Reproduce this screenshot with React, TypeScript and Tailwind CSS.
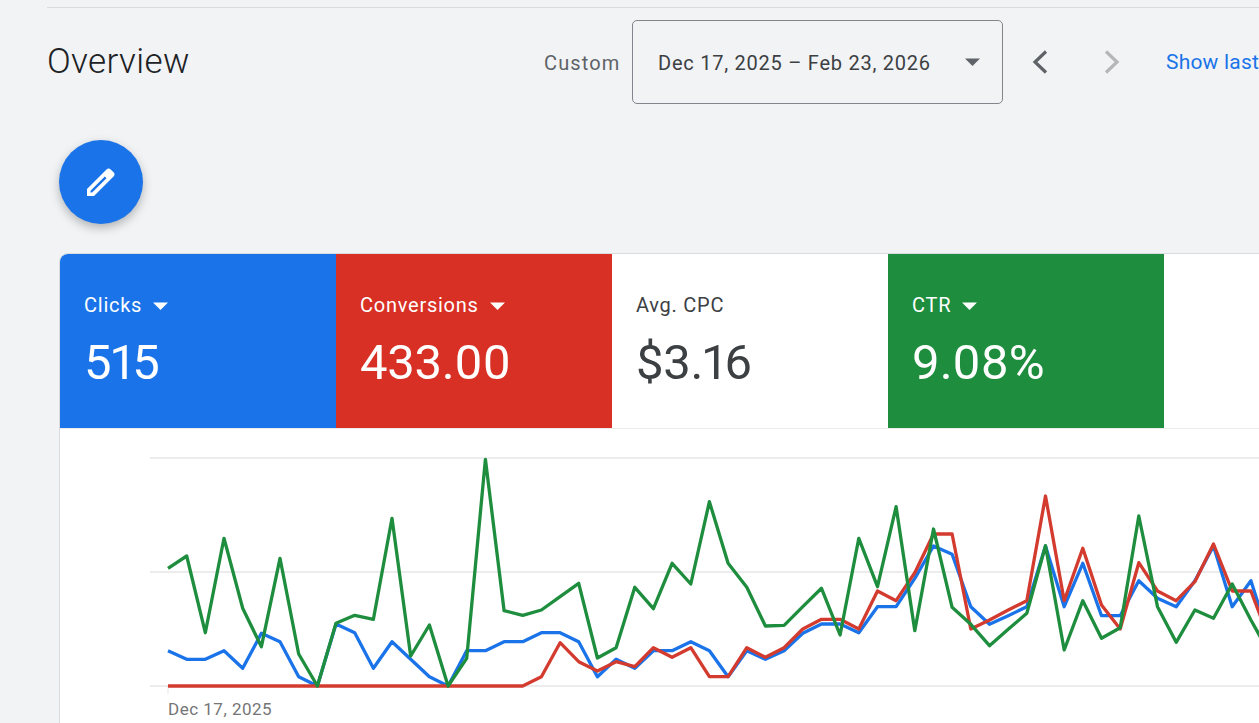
const STEP = 18.67;

// sampled off the reference: values are zoomed y offsets, real y = 450 + v / 3
const greenSeries = [
  355, 318, 548, 265, 475, 590, 325, 612, 708, 520, 496, 508, 205, 618, 525, 708, 625, 28, 482, 496,
  480, 440, 400, 624, 593, 412, 476, 340, 402, 155, 340, 412, 528, 526, 470, 415, 555, 265, 410, 170,
  542, 237, 472, 523, 587, 538, 490, 287, 600, 452, 565, 533, 198, 470, 577, 480, 505, 402, 510, 610,
];
const blueSeries = [
  602, 628, 628, 602, 655, 550, 575, 680, 708, 522, 548, 655, 575, 628, 680, 708, 602, 602, 575, 575,
  548, 548, 575, 680, 628, 655, 602, 602, 575, 602, 680, 602, 628, 602, 550, 522, 522, 548, 470, 470,
  385, 288, 313, 470, 523, 497, 470, 288, 470, 340, 497, 497, 392, 445, 470, 392, 288, 470, 392, 567,
];
const redSeries = [
  708, 708, 708, 708, 708, 708, 708, 708, 708, 708, 708, 708, 708, 708, 708, 708, 708, 708, 708, 708,
  680, 578, 635, 663, 635, 650, 593, 622, 593, 680, 680, 593, 622, 593, 537, 508, 508, 537, 423, 452,
  368, 252, 252, 537, 510, 480, 452, 138, 452, 295, 465, 537, 338, 423, 452, 395, 282, 423, 423, 570,
];

const toPoints = (series: number[]) =>
  series
    .map((v, i) => `${(168 + i * STEP).toFixed(1)},${(450 + v / 3).toFixed(1)}`)
    .join(' ');

type Metric = {
  label: string;
  value: string;
  bg: string;
  dark?: boolean;
  caret?: boolean;
};

const metrics: Metric[] = [
  { label: 'Clicks', value: '515', bg: 'bg-[#1a73e8]', caret: true },
  { label: 'Conversions', value: '433.00', bg: 'bg-[#d93025]', caret: true },
  { label: 'Avg. CPC', value: '$3.16', bg: 'bg-white', dark: true },
  { label: 'CTR', value: '9.08%', bg: 'bg-[#1e8e3e]', caret: true },
];

function Caret({ className }: { className: string }) {
  return (
    <svg width="15" height="8" viewBox="0 0 15 8" className={className}>
      <path d="M0 0.5h15L7.5 8z" fill="currentColor" />
    </svg>
  );
}

function MetricTab({ metric }: { metric: Metric }) {
  return (
    <div
      className={`flex h-[174px] w-[276px] shrink-0 flex-col pl-6 pt-[39px] ${metric.bg} ${
        metric.dark ? 'text-[#3c4043]' : 'text-white'
      }`}
    >
      <div className="flex h-6 items-center gap-[11px] text-[20px] leading-6 tracking-[0.75px]">
        <span>{metric.label}</span>
        {metric.caret && <Caret className="mt-px" />}
      </div>
      <div className="mt-[18px] text-[49px] leading-[56px] tracking-[-0.3px] proportional-nums">{metric.value}</div>
    </div>
  );
}

function Chart() {
  return (
    <div className="relative">
      <svg width="1200" height="265" viewBox="60 429 1200 265" className="block">
        {[458, 572, 686].map((y) => (
          <line key={y} x1="150" x2="1260" y1={y} y2={y} stroke="#e6e6e6" strokeWidth="1.5" />
        ))}
        <line x1="168" x2="168" y1="686" y2="694" stroke="#e6e6e6" />
        <polyline points={toPoints(blueSeries)} fill="none" stroke="#1a73e8" strokeWidth="3.3" strokeLinejoin="round" />
        <polyline points={toPoints(redSeries)} fill="none" stroke="#d33b2f" strokeWidth="3.3" strokeLinejoin="round" />
        <polyline points={toPoints(greenSeries)} fill="none" stroke="#1e8e3e" strokeWidth="3.3" strokeLinejoin="round" />
      </svg>
      <div className="pl-[108px] pt-[3px] text-[17px] leading-6 tracking-[0.5px] text-[#757575]">Dec 17, 2025</div>
    </div>
  );
}

export default function App() {
  return (
    <div className="h-[723px] w-[1259px] overflow-hidden bg-[#f1f3f5] font-['Roboto',sans-serif]">
      <div className="pl-[47px] pt-[7px]">
        <div className="h-px bg-[#dadce0]" />
      </div>

      {/* Header row */}
      <div className="flex h-[95px] items-center pl-[47px] pt-[12px] whitespace-nowrap">
        <h1 className="w-[497px] shrink-0 pt-px text-[35px] leading-10 font-light tracking-[0.4px] text-[#202124]">Overview</h1>
        <span className="w-[88px] shrink-0 pt-[2px] text-[20px] tracking-[1.15px] text-[#5f6368]">Custom</span>
        <button className="flex h-[84px] w-[371px] shrink-0 items-center justify-between rounded-[5px] border border-[#80868b] pl-[25px] pr-[22px] text-[20px] tracking-[0.75px] text-[#3c4043]">
          <span className="pt-[2px]">Dec 17, 2025 – Feb 23, 2026</span>
          <Caret className="text-[#5f6368]" />
        </button>
        <svg width="20" height="28" viewBox="0 0 20 28" className="ml-[27px] shrink-0">
          <path d="M16 3.5 5 14l11 10.5" fill="none" stroke="#5f6368" strokeWidth="3.2" />
        </svg>
        <svg width="20" height="28" viewBox="0 0 20 28" className="ml-[52px] shrink-0">
          <path d="M4 3.5 15 14 4 24.5" fill="none" stroke="#b4b6b9" strokeWidth="3.2" />
        </svg>
        <span className="ml-[44px] pt-[2px] text-[21px] tracking-[0.2px] text-[#1a73e8]">Show last</span>
      </div>

      {/* Edit button */}
      <div className="pl-[59px] pt-[37px]">
        <button className="flex h-[84px] w-[84px] items-center justify-center rounded-full bg-[#1a73e8] shadow-[0_4px_10px_rgba(60,64,67,0.35)]">
          <svg width="30" height="30" viewBox="0 0 30 30">
            <path
              fillRule="evenodd"
              fill="white"
              d="M1 29v-7L20.5 2.5a3 3 0 0 1 4.2 0l2.8 2.8a3 3 0 0 1 0 4.2L8 29zM4.5 25.5h1.6L20.5 11.2l-1.7-1.7L4.5 23.8z"
            />
          </svg>
        </button>
      </div>

      {/* Metrics card */}
      <div className="ml-[59px] mt-[29px] h-[500px] w-[1300px] overflow-hidden rounded-t-[9px] border-l border-t border-[#dadce0] bg-white">
        <div className="flex border-b border-[#ececec]">
          {metrics.map((m) => (
            <MetricTab key={m.label} metric={m} />
          ))}
        </div>
        <Chart />
      </div>
    </div>
  );
}
